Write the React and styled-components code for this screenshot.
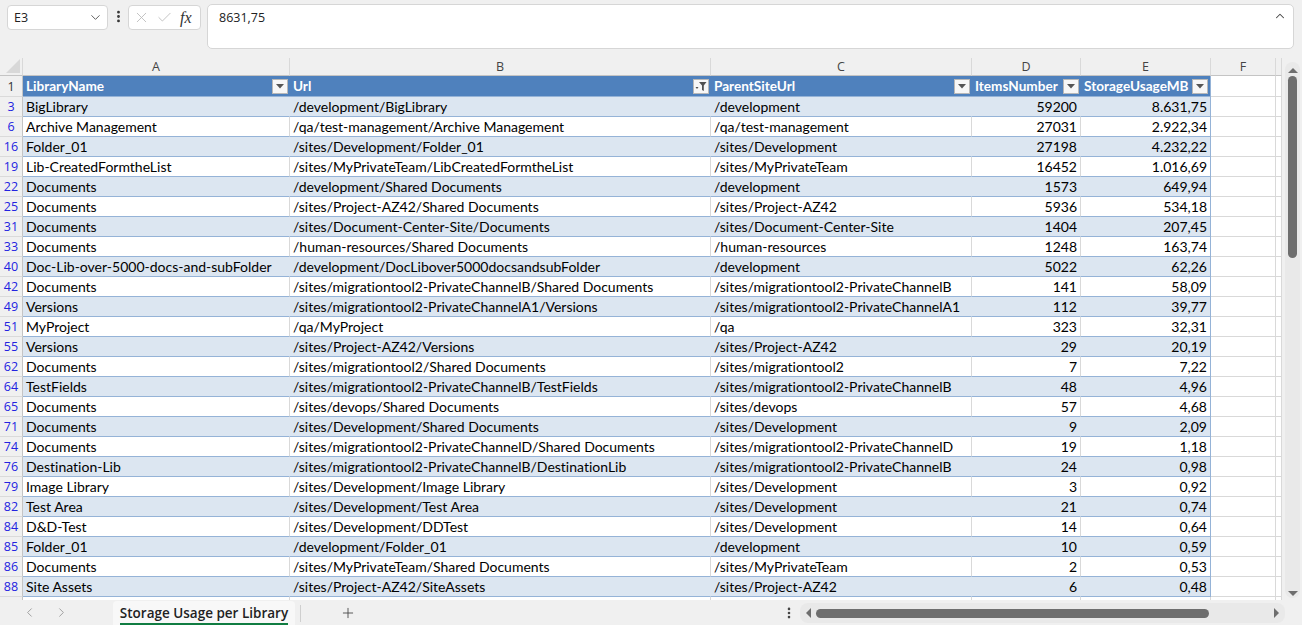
import styled, { createGlobalStyle } from "styled-components";
import { ChevronDown, ChevronUp, X, Check, ChevronLeft, ChevronRight, Plus, EllipsisVertical } from "lucide-react";

const rows = [
  [3, "BigLibrary", "/development/BigLibrary", "/development", 59200, "8.631,75"],
  [6, "Archive Management", "/qa/test-management/Archive Management", "/qa/test-management", 27031, "2.922,34"],
  [16, "Folder_01", "/sites/Development/Folder_01", "/sites/Development", 27198, "4.232,22"],
  [19, "Lib-CreatedFormtheList", "/sites/MyPrivateTeam/LibCreatedFormtheList", "/sites/MyPrivateTeam", 16452, "1.016,69"],
  [22, "Documents", "/development/Shared Documents", "/development", 1573, "649,94"],
  [25, "Documents", "/sites/Project-AZ42/Shared Documents", "/sites/Project-AZ42", 5936, "534,18"],
  [31, "Documents", "/sites/Document-Center-Site/Documents", "/sites/Document-Center-Site", 1404, "207,45"],
  [33, "Documents", "/human-resources/Shared Documents", "/human-resources", 1248, "163,74"],
  [40, "Doc-Lib-over-5000-docs-and-subFolder", "/development/DocLibover5000docsandsubFolder", "/development", 5022, "62,26"],
  [42, "Documents", "/sites/migrationtool2-PrivateChannelB/Shared Documents", "/sites/migrationtool2-PrivateChannelB", 141, "58,09"],
  [49, "Versions", "/sites/migrationtool2-PrivateChannelA1/Versions", "/sites/migrationtool2-PrivateChannelA1", 112, "39,77"],
  [51, "MyProject", "/qa/MyProject", "/qa", 323, "32,31"],
  [55, "Versions", "/sites/Project-AZ42/Versions", "/sites/Project-AZ42", 29, "20,19"],
  [62, "Documents", "/sites/migrationtool2/Shared Documents", "/sites/migrationtool2", 7, "7,22"],
  [64, "TestFields", "/sites/migrationtool2-PrivateChannelB/TestFields", "/sites/migrationtool2-PrivateChannelB", 48, "4,96"],
  [65, "Documents", "/sites/devops/Shared Documents", "/sites/devops", 57, "4,68"],
  [71, "Documents", "/sites/Development/Shared Documents", "/sites/Development", 9, "2,09"],
  [74, "Documents", "/sites/migrationtool2-PrivateChannelD/Shared Documents", "/sites/migrationtool2-PrivateChannelD", 19, "1,18"],
  [76, "Destination-Lib", "/sites/migrationtool2-PrivateChannelB/DestinationLib", "/sites/migrationtool2-PrivateChannelB", 24, "0,98"],
  [79, "Image Library", "/sites/Development/Image Library", "/sites/Development", 3, "0,92"],
  [82, "Test Area", "/sites/Development/Test Area", "/sites/Development", 21, "0,74"],
  [84, "D&D-Test", "/sites/Development/DDTest", "/sites/Development", 14, "0,64"],
  [85, "Folder_01", "/development/Folder_01", "/development", 10, "0,59"],
  [86, "Documents", "/sites/MyPrivateTeam/Shared Documents", "/sites/MyPrivateTeam", 2, "0,53"],
  [88, "Site Assets", "/sites/Project-AZ42/SiteAssets", "/sites/Project-AZ42", 6, "0,48"],
];

const headers = [
  { title: "LibraryName" },
  { title: "Url", filtered: true },
  { title: "ParentSiteUrl" },
  { title: "ItemsNumber" },
  { title: "StorageUsageMB" },
];

const COLS = "23px 267px 421px 261px 109px 130px 65px 1fr";

const GlobalStyle = createGlobalStyle`
  body {
    margin: 0;
    background: #f0f0f0;
    overflow: hidden;
  }
`;

const Window = styled.div`
  width: 1302px;
  height: 625px;
  display: flex;
  flex-direction: column;
  background: #f0f0f0;
  font-family: "Open Sans", "Noto Sans", sans-serif;
  font-variant-ligatures: none;
`;

const FormulaBar = styled.div`
  height: 58px;
  display: flex;
  align-items: flex-start;
  padding: 4px 8px 0 7px;
  box-sizing: border-box;
`;

const NameBox = styled.div`
  width: 101px;
  height: 25px;
  box-sizing: border-box;
  background: #fff;
  border: 1px solid #d6d6d6;
  border-radius: 4px;
  display: flex;
  align-items: center;
  justify-content: space-between;
  padding: 0 4px 0 6px;
  font-size: 12.5px;
  color: #222;
  margin-top: 1px;
`;

const Dots = styled.div`
  width: 20px;
  height: 25px;
  display: flex;
  align-items: center;
  justify-content: center;
  color: #333;
`;

const FxGroup = styled.div`
  width: 73px;
  height: 25px;
  box-sizing: border-box;
  background: #fff;
  border: 1px solid #d6d6d6;
  border-radius: 4px;
  display: flex;
  align-items: center;
  padding: 0 4px;
  gap: 6px;
  color: #b9b9b9;
  margin-top: 1px;
`;

const Fx = styled.span`
  font-family: "Liberation Serif", serif;
  font-style: italic;
  font-size: 16px;
  color: #333;
  margin-left: 1px;
`;

const FormulaInput = styled.div`
  flex: 1;
  margin-left: 6px;
  height: 45px;
  box-sizing: border-box;
  background: #fff;
  border: 1px solid #d6d6d6;
  border-radius: 5px;
  display: flex;
  justify-content: space-between;
  padding: 4px 6px 0 11px;
  font-size: 12.5px;
  color: #222;
`;

const Body = styled.div`
  height: 542px;
  display: flex;
`;

const Sheet = styled.div`
  width: 1282px;
  overflow: hidden;
  font-family: Lato, "Liberation Sans", sans-serif;
  font-size: 14px;
  color: #000;
`;

const Row = styled.div`
  display: grid;
  grid-template-columns: ${COLS};
  height: ${(p) => p.$h || 20}px;
`;

const ColHead = styled.div`
  background: #f0f0f0;
  border-right: 1px solid #d9d9d9;
  border-bottom: 1px solid #c4c4c4;
  display: flex;
  align-items: center;
  justify-content: center;
  font-family: "Open Sans", sans-serif;
  font-size: 12.5px;
  color: #444;
  position: relative;
  overflow: hidden;
`;

const Corner = styled(ColHead)`
  &::after {
    content: "";
    position: absolute;
    right: 2px;
    bottom: 2px;
    border-left: 14px solid transparent;
    border-bottom: 14px solid #d8d8d8;
  }
`;

const RowNum = styled.div`
  background: #f0f0f0;
  border-right: 1px solid #c4c4c4;
  border-bottom: 1px solid #dadada;
  display: flex;
  align-items: center;
  justify-content: center;
  font-family: "Open Sans", sans-serif;
  font-size: 12.5px;
  color: ${(p) => (p.$filtered ? "#2323e0" : "#333")};
`;

const HeadCell = styled.div`
  background: #4f81bd;
  color: #fff;
  font-weight: 700;
  font-size: 13.6px;
  display: flex;
  align-items: center;
  gap: 2px;
  padding: 0 2px 0 3px;
  border-bottom: 1px solid #95b3d7;
  border-right: ${(p) => (p.$last ? "1px solid #95b3d7" : "none")};
  white-space: nowrap;
  overflow: hidden;
`;

const HeadText = styled.span`
  flex: 1;
  overflow: hidden;
`;

const FilterBtn = styled.div`
  width: 16px;
  height: 15px;
  box-sizing: border-box;
  background: #f7f7f7;
  border: 1px solid #b8b8b8;
  display: flex;
  align-items: center;
  justify-content: center;
  flex-shrink: 0;
`;

const Cell = styled.div`
  background: ${(p) => (p.$band ? "#dce6f1" : "#fff")};
  border-bottom: 1px solid #95b3d7;
  border-right: 1px solid ${(p) => (p.$last ? "#95b3d7" : p.$band ? "#dce6f1" : "#d9d9d9")};
  display: flex;
  align-items: center;
  justify-content: ${(p) => (p.$num ? "flex-end" : "flex-start")};
  padding: 0 3px;
  white-space: nowrap;
  overflow: hidden;
`;

const Blank = styled.div`
  background: #fff;
  border-right: 1px solid #d9d9d9;
  border-bottom: 1px solid #d9d9d9;
`;

const VScroll = styled.div`
  flex: 1;
  padding: 4px 2px 2px 3px;
  display: flex;
`;

const VTrack = styled.div`
  flex: 1;
  background: #e9e9e9;
  border-radius: 8px;
  display: flex;
  flex-direction: column;
  align-items: center;
  padding: 6px 0 2px;
`;

const VThumb = styled.div`
  width: 9px;
  height: 182px;
  background: #6e6e6e;
  border-radius: 5px;
  margin-top: 3px;
  margin-bottom: auto;
`;

const Tri = styled.div`
  width: 0;
  height: 0;
  border: 5px solid transparent;
  ${(p) => p.$dir === "up" && "border-bottom-color: #6e6e6e; border-top-width: 0;"}
  ${(p) => p.$dir === "down" && "border-top-color: #6e6e6e; border-bottom-width: 0;"}
  ${(p) => p.$dir === "left" && "border-right-color: #6e6e6e; border-left-width: 0;"}
  ${(p) => p.$dir === "right" && "border-left-color: #6e6e6e; border-right-width: 0;"}
`;

const Bottom = styled.div`
  height: 25px;
  display: flex;
  align-items: stretch;
`;

const NavArrows = styled.div`
  width: 113px;
  display: flex;
  align-items: center;
  padding-left: 22px;
  gap: 17px;
  box-sizing: border-box;
  color: #9c9c9c;
`;

const Tab = styled.div`
  width: 182px;
  background: #f8f8f8;
  border-radius: 4px 4px 0 0;
  display: flex;
  align-items: center;
  justify-content: center;
  font-family: "Open Sans", sans-serif;
  font-size: 13.5px;
  font-weight: 600;
  color: #222;
  margin-top: 1px;
`;

const TabLabel = styled.span`
  border-bottom: 2px solid #107c41;
  line-height: 19px;
  padding-top: 2px;
`;

const TabSep = styled.div`
  width: 1px;
  background: #cfcfcf;
  margin: 5px 0 3px 5px;
`;

const AddSheet = styled.div`
  width: 94px;
  display: flex;
  align-items: center;
  justify-content: center;
  color: #444;
`;

const Spacer = styled.div`
  flex: 1;
  display: flex;
  align-items: center;
  justify-content: flex-end;
  padding-right: 4px;
  color: #444;
`;

const HScroll = styled.div`
  width: 485px;
  margin: 3px 17px 2px 0;
  background: #e9e9e9;
  border-radius: 8px;
  display: flex;
  align-items: center;
  padding: 0 6px;
  box-sizing: border-box;
`;

const HThumb = styled.div`
  width: 393px;
  height: 9px;
  background: #6e6e6e;
  border-radius: 5px;
  margin-left: 5px;
  margin-right: auto;
`;

function FilterIcon({ filtered }) {
  if (filtered) {
    return (
      <svg width="12" height="11" viewBox="0 0 12 11">
        <path d="M4 1 H11.5 L8.8 4.5 V10 L7 9 V4.5 Z" fill="#505050" />
        <path d="M0.5 6 L3.5 6 L2 8 Z" fill="#505050" />
      </svg>
    );
  }
  return (
    <svg width="8" height="5" viewBox="0 0 8 5">
      <path d="M0 0 H8 L4 4.5 Z" fill="#555" />
    </svg>
  );
}

export default function App() {
  return (
    <Window>
      <GlobalStyle />
      <FormulaBar>
        <NameBox>
          E3
          <ChevronDown size={15} strokeWidth={1.5} color="#555" />
        </NameBox>
        <Dots>
          <EllipsisVertical size={15} strokeWidth={2.5} />
        </Dots>
        <FxGroup>
          <X size={17} strokeWidth={1.2} />
          <Check size={17} strokeWidth={1.2} />
          <Fx>fx</Fx>
        </FxGroup>
        <FormulaInput>
          <span>8631,75</span>
          <ChevronUp size={14} strokeWidth={1.8} color="#444" />
        </FormulaInput>
      </FormulaBar>

      <Body>
        <Sheet>
          <Row $h={18}>
            <Corner />
            <ColHead>A</ColHead>
            <ColHead>B</ColHead>
            <ColHead>C</ColHead>
            <ColHead>D</ColHead>
            <ColHead>E</ColHead>
            <ColHead>F</ColHead>
            <ColHead />
          </Row>
          <Row $h={21}>
            <RowNum>1</RowNum>
            {headers.map((h, i) => (
              <HeadCell key={h.title} $last={i === 4}>
                <HeadText>{h.title}</HeadText>
                <FilterBtn>
                  <FilterIcon filtered={h.filtered} />
                </FilterBtn>
              </HeadCell>
            ))}
            <Blank />
            <Blank />
          </Row>
          {rows.map(([n, name, url, parent, items, size], i) => {
            const band = i % 2 === 0;
            return (
              <Row key={n}>
                <RowNum $filtered>{n}</RowNum>
                <Cell $band={band}>{name}</Cell>
                <Cell $band={band}>{url}</Cell>
                <Cell $band={band}>{parent}</Cell>
                <Cell $band={band} $num>{items}</Cell>
                <Cell $band={band} $num $last>{size}</Cell>
                <Blank />
                <Blank />
              </Row>
            );
          })}
          <Row>
            <RowNum />
            <Blank />
            <Blank />
            <Blank />
            <Blank />
            <Blank />
            <Blank />
            <Blank />
          </Row>
        </Sheet>
        <VScroll>
          <VTrack>
            <Tri $dir="up" />
            <VThumb />
            <Tri $dir="down" />
          </VTrack>
        </VScroll>
      </Body>

      <Bottom>
        <NavArrows>
          <ChevronLeft size={15} strokeWidth={1.5} />
          <ChevronRight size={15} strokeWidth={1.5} />
        </NavArrows>
        <Tab>
          <TabLabel>Storage Usage per Library</TabLabel>
        </Tab>
        <TabSep />
        <AddSheet>
          <Plus size={16} strokeWidth={1.3} />
        </AddSheet>
        <Spacer>
          <EllipsisVertical size={14} strokeWidth={2.5} />
        </Spacer>
        <HScroll>
          <Tri $dir="left" />
          <HThumb />
          <Tri $dir="right" />
        </HScroll>
      </Bottom>
    </Window>
  );
}
